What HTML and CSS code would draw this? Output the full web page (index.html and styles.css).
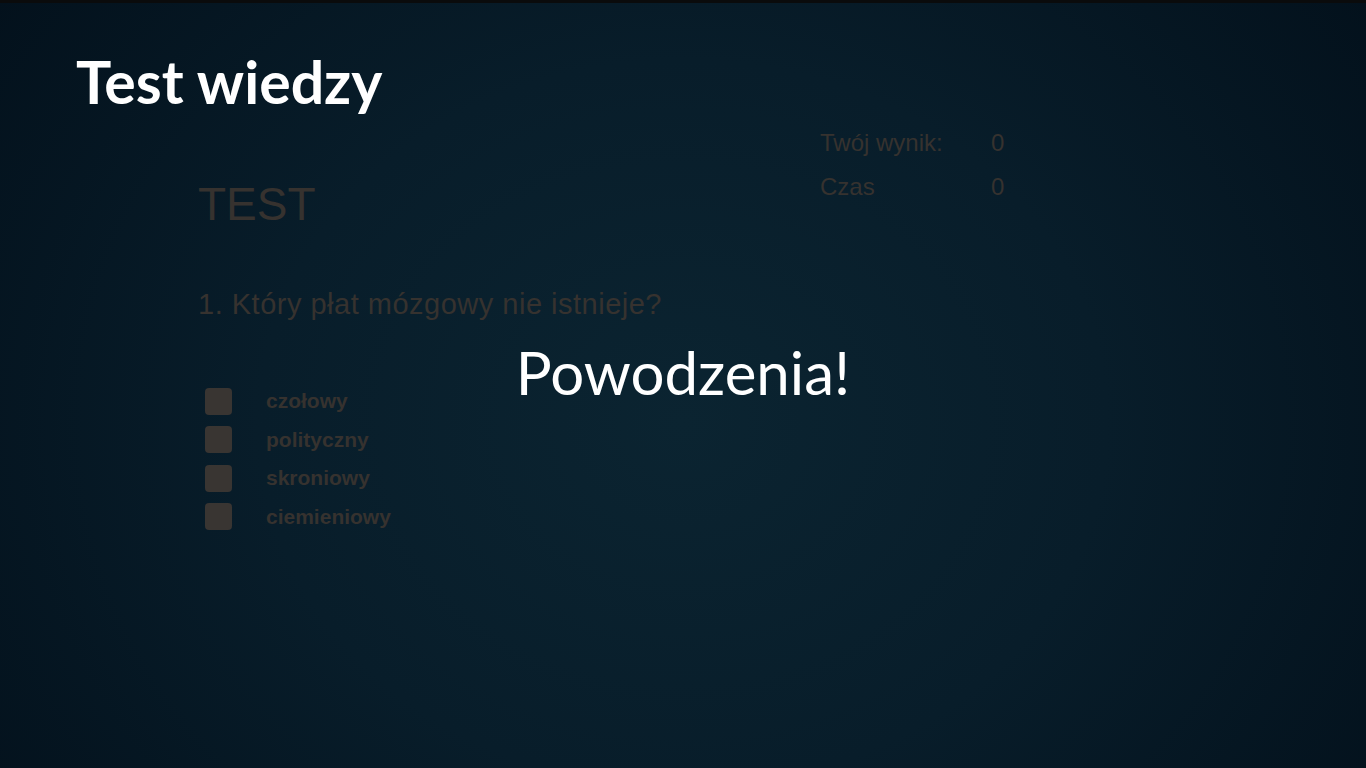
FILE: index.html
```html
<!DOCTYPE html>
<html lang="pl">
<head>
<meta charset="utf-8">
<title>Test wiedzy</title>
<link rel="stylesheet" href="styles.css">
</head>
<body>
<div class="slide">
  <h1 class="title">Test wiedzy</h1>
  <div class="quiz">
    <div class="quiz-main">
      <div class="quiz-heading">TEST</div>
      <div class="question">1. Który płat mózgowy nie istnieje?</div>
      <ul class="answers">
        <li class="answer"><span class="box"></span><span class="label">czołowy</span></li>
        <li class="answer"><span class="box"></span><span class="label">polityczny</span></li>
        <li class="answer"><span class="box"></span><span class="label">skroniowy</span></li>
        <li class="answer"><span class="box"></span><span class="label">ciemieniowy</span></li>
      </ul>
    </div>
    <div class="stats">
      <div class="stat"><span class="stat-name">Twój wynik:</span><span class="stat-val">0</span></div>
      <div class="stat"><span class="stat-name">Czas</span><span class="stat-val">0</span></div>
    </div>
  </div>
  <div class="overlay">Powodzenia!</div>
</div>
</body>
</html>
```
FILE: styles.css
```css
html, body {
  margin: 0;
  padding: 0;
  width: 100%;
  height: 100%;
  overflow: hidden;
}
body {
  background: #03121d;
}
.slide {
  position: relative;
  width: 1366px;
  height: 768px;
  box-sizing: border-box;
  border-top: 3px solid #0a0b0c;
  background: radial-gradient(ellipse 62% 95% at 50% 55%, #0b2431 0%, #081d2a 50%, #03111c 100%);
  overflow: hidden;
}
.title {
  margin: 0;
  padding: 46px 0 0 76px;
  font-family: Lato, "Liberation Sans", sans-serif;
  font-weight: 700;
  font-size: 59px;
  line-height: 66px;
  color: #ffffff;
}
.quiz {
  display: flex;
  padding-left: 198px;
  font-family: "Liberation Sans", Arial, sans-serif;
  color: #36322f;
}
.quiz-main {
  width: 622px;
  padding-top: 61px;
}
.quiz-heading {
  font-size: 46px;
  line-height: 56px;
}
.question {
  margin-top: 56px;
  font-size: 29px;
  line-height: 32px;
  letter-spacing: 0.5px;
}
.answers {
  list-style: none;
  margin: 62px 0 0 7px;
  padding: 0;
}
.answer {
  display: flex;
  align-items: center;
  height: 38.5px;
}
.box {
  width: 27px;
  height: 27px;
  border-radius: 4px;
  background: #393532;
  flex: none;
}
.label {
  margin-left: 34px;
  font-weight: 700;
  font-size: 21px;
}
.stats {
  display: flex;
  flex-direction: column;
  gap: 12px;
  padding-top: 12px;
}
.stat {
  display: flex;
  font-size: 24px;
  line-height: 32px;
}
.stat-name {
  width: 171px;
}
.overlay {
  position: absolute;
  left: 0;
  right: 0;
  top: 334px;
  text-align: center;
  font-family: Lato, "Liberation Sans", sans-serif;
  font-weight: 400;
  font-size: 60px;
  line-height: 70px;
  color: #ffffff;
}
```
